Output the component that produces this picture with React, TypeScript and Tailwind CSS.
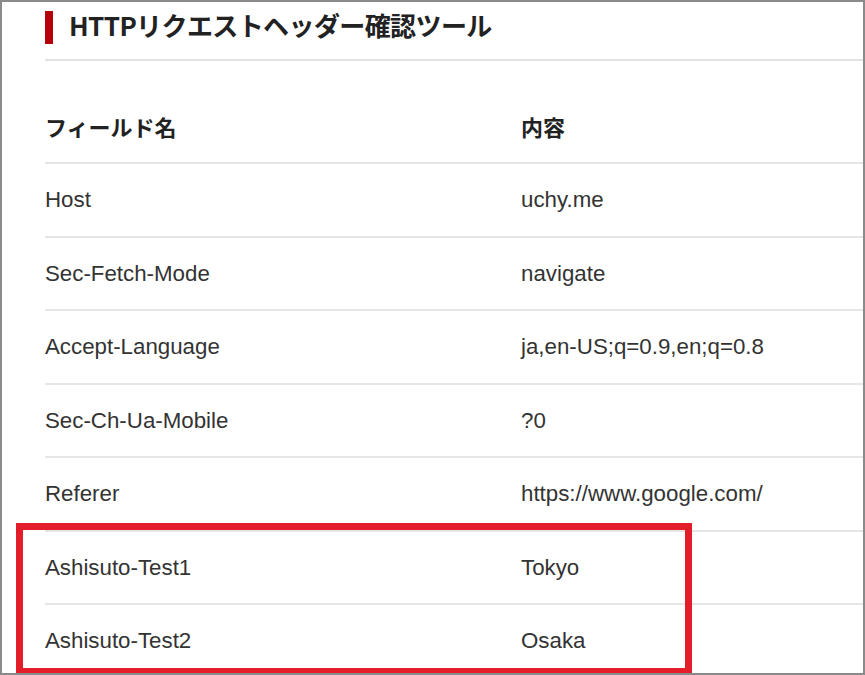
const rows: [string, string][] = [
  ["Host", "uchy.me"],
  ["Sec-Fetch-Mode", "navigate"],
  ["Accept-Language", "ja,en-US;q=0.9,en;q=0.8"],
  ["Sec-Ch-Ua-Mobile", "?0"],
  ["Referer", "https://www.google.com/"],
  ["Ashisuto-Test1", "Tokyo"],
  ["Ashisuto-Test2", "Osaka"],
];

export default function App() {
  return (
    <div className="relative h-[675px] w-[865px] overflow-hidden border-2 border-[#8a8a8a] bg-white text-[#333] [font-family:'Liberation_Sans','Noto_Sans_CJK_JP',sans-serif]">
      <div className="pl-[43px]">
        {/* title */}
        <div className="flex h-[59px] items-start border-b-2 border-[#e2e2e2]">
          <span className="mt-[9px] h-[33px] w-[8px] bg-[#b5000b]" />
          <h1 className="ml-[16px] mt-[5px] text-[26px] font-bold leading-[36px] tracking-[-0.6px] text-[#222] [font-family:'Noto_Sans_CJK_JP',sans-serif]">
            HTTPリクエストヘッダー確認ツール
          </h1>
        </div>

        {/* table */}
        <div className="mt-[31px]">
          <div className="flex h-[72px] items-center border-b-2 border-[#e6e6e6] pb-[2px] text-[22px] font-bold text-[#222] [font-family:'Noto_Sans_CJK_JP',sans-serif]">
            <div className="w-[476px]">フィールド名</div>
            <div>内容</div>
          </div>
          {rows.map(([k, v]) => (
            <div
              key={k}
              className="flex h-[73.5px] items-center border-b-2 border-[#e6e6e6] text-[22.3px] text-[#333]"
            >
              <div className="w-[476px]">{k}</div>
              <div>{v}</div>
            </div>
          ))}
        </div>
      </div>

      {/* highlight box */}
      <div className="absolute left-[14px] top-[521px] h-[152px] w-[676px] border-[7px] border-[#e31e2a]" />
    </div>
  );
}
